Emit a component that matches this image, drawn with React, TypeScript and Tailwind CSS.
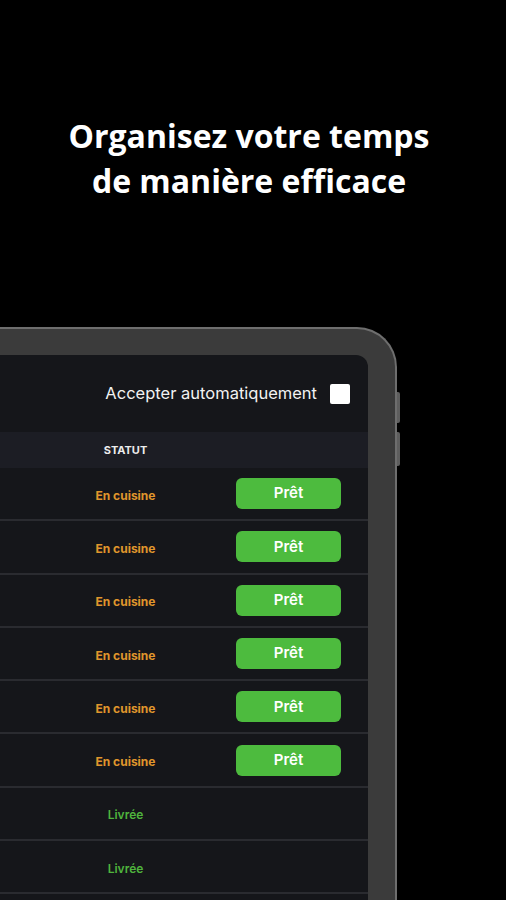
const rows: Array<{ status: 'cuisine' | 'livree' }> = [
  { status: 'cuisine' },
  { status: 'cuisine' },
  { status: 'cuisine' },
  { status: 'cuisine' },
  { status: 'cuisine' },
  { status: 'cuisine' },
  { status: 'livree' },
  { status: 'livree' },
];

function OrderRow({ status }: { status: 'cuisine' | 'livree' }) {
  return (
    <div className="flex h-[53.3px] shrink-0 items-center justify-end border-b-2 border-[#2a2b30]">
      <div className="w-[221px] text-center">
        {status === 'cuisine' ? (
          <span className="text-[12px] font-bold text-[#e0962c]">En cuisine</span>
        ) : (
          <span className="text-[12px] font-semibold text-[#4fb43d]">Livrée</span>
        )}
      </div>
      <div className="w-[132px] pr-[27px]">
        {status === 'cuisine' && (
          <button className="flex h-[31px] w-[105px] items-center justify-center rounded-[6px] bg-[#4dbb3e] text-[15px] font-semibold text-white">
            Prêt
          </button>
        )}
      </div>
    </div>
  );
}

export default function App() {
  return (
    <div className="flex h-[900px] w-[506px] flex-col overflow-hidden bg-black font-['Inter',sans-serif]">
      {/* Headline */}
      <h1 className="mt-[113px] pr-[8px] text-center font-['Open_Sans',sans-serif] text-[32px] font-bold leading-[45px] text-white">
        Organisez votre temps
        <br />
        de manière efficace
      </h1>

      {/* Tablet mockup */}
      <div className="relative ml-[-40px] mt-[124px] w-[437px] flex-1 rounded-tr-[40px] border-t-2 border-r-2 border-[#6e6e6e] bg-[#3b3b3b] pt-[26px] pr-[27px]">
        <div className="absolute right-[-5px] top-[63px] h-[31px] w-[3px] rounded-r-[2px] bg-[#5e5e5e]" />
        <div className="absolute right-[-5px] top-[103px] h-[34px] w-[3px] rounded-r-[2px] bg-[#5e5e5e]" />

        <div className="flex h-full flex-col rounded-tr-[12px] bg-[#15161a]">
          {/* Toolbar */}
          <div className="flex h-[77px] shrink-0 items-center justify-end gap-[13px] pr-[18px]">
            <span className="text-[16.5px] text-[#f2f2f2]">Accepter automatiquement</span>
            <div className="h-[20px] w-[20px] rounded-[2px] bg-white" />
          </div>

          {/* Table header */}
          <div className="flex h-[36px] shrink-0 items-center justify-end bg-[#1c1d24]">
            <div className="w-[221px] text-center text-[11px] font-bold text-[#ececec]">STATUT</div>
            <div className="w-[132px]" />
          </div>

          {rows.map((r, i) => (
            <OrderRow key={i} status={r.status} />
          ))}
        </div>
      </div>
    </div>
  );
}
